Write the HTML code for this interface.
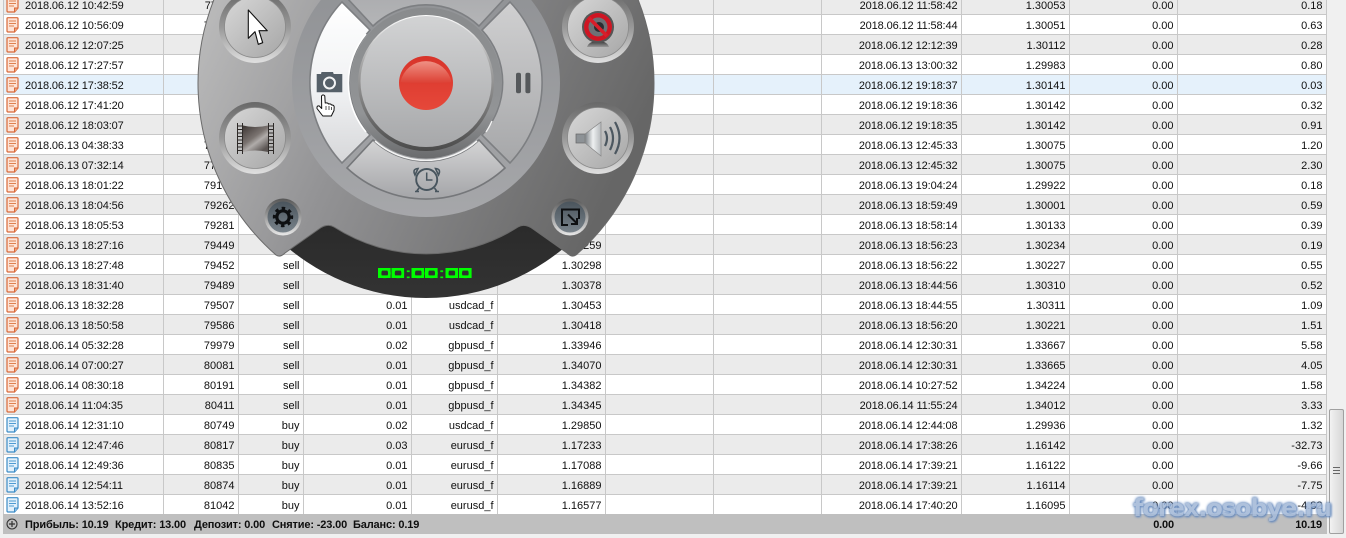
<!DOCTYPE html>
<html><head><meta charset="utf-8"><style>
html,body{margin:0;padding:0;width:1346px;height:538px;overflow:hidden;background:#f0f0f0}
body{position:relative;font:11px "Liberation Sans","DejaVu Sans",sans-serif;color:#0f0f0f}
table{position:absolute;left:3px;top:-5px;width:1324px;table-layout:fixed;border-collapse:separate;border-spacing:0;background:#fff;border-left:1px solid #c4c8cc}
td{height:16px;padding:3px 3.5px 0 0;border-right:1px solid #c8c8c8;border-bottom:1px solid #c8c8c8;text-align:right;white-space:nowrap;overflow:hidden;line-height:16px}
td:first-child{text-align:left;padding-left:21px;position:relative;letter-spacing:-.12px}
td:nth-child(9){letter-spacing:-.12px}
tr:nth-child(odd) td{background:#ebebeb}
tr.h td{background:#e5f1fb!important}
.i{position:absolute;left:2px;top:2px}
#foot{position:absolute;left:3px;top:514px;width:1324px;height:20px;background:#bfbfbf;font-weight:bold;line-height:22px;letter-spacing:-.15px}
#foot span{position:absolute;top:0}
#sb{position:absolute;left:1329px;top:409px;width:13px;height:123px;border:1px solid #a0a0a0;border-radius:2px;background:linear-gradient(90deg,#f2f2f2,#d6d6d6)}
#sb i{position:absolute;left:3px;top:57px;width:7px;height:5px;border-top:1px solid #666;border-bottom:1px solid #666}
#sb i:after{content:"";position:absolute;left:0;top:2px;width:7px;height:1px;background:#666}
#wm{position:absolute;left:1133px;top:494px;width:205px;font:bold 24px "DejaVu Sans",sans-serif;letter-spacing:-1.05px;color:#a6bbd9;white-space:nowrap;text-shadow:0 0 2px #5a7fb5,0 0 3px #6489bd,1px 1px 2px #6489bd;opacity:.9}
svg#d{position:absolute;left:0;top:0}
</style></head><body>
<svg width="0" height="0" style="position:absolute"><defs>
<symbol id="o" viewBox="0 0 13 16"><path d="M1 1.500Q1 .7 2 .7H11Q12 .7 12 1.500V11L8.500 15H2Q1 15 1 14Z" fill="#fde3d6" stroke="#d8693a" stroke-width="1.2"/><path d="M3 4H10M3 6.500H10M3 9H8" stroke="#e0814f" stroke-width="1.1"/><path d="M8.500 15V11H12" fill="#f0a27c" stroke="#d8693a"/></symbol>
<symbol id="b" viewBox="0 0 13 16"><path d="M1 1.500Q1 .7 2 .7H11Q12 .7 12 1.500V11L8.500 15H2Q1 15 1 14Z" fill="#e2f0fb" stroke="#3d8cc6" stroke-width="1.2"/><path d="M3 4H10M3 6.500H10M3 9H8" stroke="#4f9bd2" stroke-width="1.1"/><path d="M8.500 15V11H12" fill="#8fc1e6" stroke="#3d8cc6"/></symbol>
</defs></svg>
<table>
<colgroup><col style="width:160px"><col style="width:75px"><col style="width:65px"><col style="width:108px"><col style="width:86px"><col style="width:108px"><col style="width:108px"><col style="width:108px"><col style="width:140px"><col style="width:108px"><col style="width:108px"><col></colgroup>
<tr><td><svg class="i" width="13" height="16"><use href="#o"/></svg>2018.06.12 10:42:59</td><td>77011</td><td>sell</td><td>0.01</td><td>usdcad_f</td><td>1.30120</td><td></td><td></td><td>2018.06.12 11:58:42</td><td>1.30053</td><td>0.00</td><td>0.18</td></tr>
<tr><td><svg class="i" width="13" height="16"><use href="#o"/></svg>2018.06.12 10:56:09</td><td>77025</td><td></td><td></td><td></td><td></td><td></td><td></td><td>2018.06.12 11:58:44</td><td>1.30051</td><td>0.00</td><td>0.63</td></tr>
<tr><td><svg class="i" width="13" height="16"><use href="#o"/></svg>2018.06.12 12:07:25</td><td></td><td></td><td></td><td></td><td></td><td></td><td></td><td>2018.06.12 12:12:39</td><td>1.30112</td><td>0.00</td><td>0.28</td></tr>
<tr><td><svg class="i" width="13" height="16"><use href="#o"/></svg>2018.06.12 17:27:57</td><td></td><td></td><td></td><td></td><td></td><td></td><td></td><td>2018.06.13 13:00:32</td><td>1.29983</td><td>0.00</td><td>0.80</td></tr>
<tr class="h"><td><svg class="i" width="13" height="16"><use href="#o"/></svg>2018.06.12 17:38:52</td><td></td><td></td><td></td><td></td><td></td><td></td><td></td><td>2018.06.12 19:18:37</td><td>1.30141</td><td>0.00</td><td>0.03</td></tr>
<tr><td><svg class="i" width="13" height="16"><use href="#o"/></svg>2018.06.12 17:41:20</td><td></td><td></td><td></td><td></td><td></td><td></td><td></td><td>2018.06.12 19:18:36</td><td>1.30142</td><td>0.00</td><td>0.32</td></tr>
<tr><td><svg class="i" width="13" height="16"><use href="#o"/></svg>2018.06.12 18:03:07</td><td></td><td></td><td></td><td></td><td></td><td></td><td></td><td>2018.06.12 19:18:35</td><td>1.30142</td><td>0.00</td><td>0.91</td></tr>
<tr><td><svg class="i" width="13" height="16"><use href="#o"/></svg>2018.06.13 04:38:33</td><td>77801</td><td></td><td></td><td></td><td></td><td></td><td></td><td>2018.06.13 12:45:33</td><td>1.30075</td><td>0.00</td><td>1.20</td></tr>
<tr><td><svg class="i" width="13" height="16"><use href="#o"/></svg>2018.06.13 07:32:14</td><td>77944</td><td></td><td></td><td></td><td></td><td></td><td></td><td>2018.06.13 12:45:32</td><td>1.30075</td><td>0.00</td><td>2.30</td></tr>
<tr><td><svg class="i" width="13" height="16"><use href="#o"/></svg>2018.06.13 18:01:22</td><td>79187</td><td></td><td></td><td></td><td></td><td></td><td></td><td>2018.06.13 19:04:24</td><td>1.29922</td><td>0.00</td><td>0.18</td></tr>
<tr><td><svg class="i" width="13" height="16"><use href="#o"/></svg>2018.06.13 18:04:56</td><td>79262</td><td></td><td></td><td></td><td></td><td></td><td></td><td>2018.06.13 18:59:49</td><td>1.30001</td><td>0.00</td><td>0.59</td></tr>
<tr><td><svg class="i" width="13" height="16"><use href="#o"/></svg>2018.06.13 18:05:53</td><td>79281</td><td></td><td></td><td></td><td></td><td></td><td></td><td>2018.06.13 18:58:14</td><td>1.30133</td><td>0.00</td><td>0.39</td></tr>
<tr><td><svg class="i" width="13" height="16"><use href="#o"/></svg>2018.06.13 18:27:16</td><td>79449</td><td>sell</td><td></td><td></td><td>1.30259</td><td></td><td></td><td>2018.06.13 18:56:23</td><td>1.30234</td><td>0.00</td><td>0.19</td></tr>
<tr><td><svg class="i" width="13" height="16"><use href="#o"/></svg>2018.06.13 18:27:48</td><td>79452</td><td>sell</td><td></td><td></td><td>1.30298</td><td></td><td></td><td>2018.06.13 18:56:22</td><td>1.30227</td><td>0.00</td><td>0.55</td></tr>
<tr><td><svg class="i" width="13" height="16"><use href="#o"/></svg>2018.06.13 18:31:40</td><td>79489</td><td>sell</td><td></td><td></td><td>1.30378</td><td></td><td></td><td>2018.06.13 18:44:56</td><td>1.30310</td><td>0.00</td><td>0.52</td></tr>
<tr><td><svg class="i" width="13" height="16"><use href="#o"/></svg>2018.06.13 18:32:28</td><td>79507</td><td>sell</td><td>0.01</td><td>usdcad_f</td><td>1.30453</td><td></td><td></td><td>2018.06.13 18:44:55</td><td>1.30311</td><td>0.00</td><td>1.09</td></tr>
<tr><td><svg class="i" width="13" height="16"><use href="#o"/></svg>2018.06.13 18:50:58</td><td>79586</td><td>sell</td><td>0.01</td><td>usdcad_f</td><td>1.30418</td><td></td><td></td><td>2018.06.13 18:56:20</td><td>1.30221</td><td>0.00</td><td>1.51</td></tr>
<tr><td><svg class="i" width="13" height="16"><use href="#o"/></svg>2018.06.14 05:32:28</td><td>79979</td><td>sell</td><td>0.02</td><td>gbpusd_f</td><td>1.33946</td><td></td><td></td><td>2018.06.14 12:30:31</td><td>1.33667</td><td>0.00</td><td>5.58</td></tr>
<tr><td><svg class="i" width="13" height="16"><use href="#o"/></svg>2018.06.14 07:00:27</td><td>80081</td><td>sell</td><td>0.01</td><td>gbpusd_f</td><td>1.34070</td><td></td><td></td><td>2018.06.14 12:30:31</td><td>1.33665</td><td>0.00</td><td>4.05</td></tr>
<tr><td><svg class="i" width="13" height="16"><use href="#o"/></svg>2018.06.14 08:30:18</td><td>80191</td><td>sell</td><td>0.01</td><td>gbpusd_f</td><td>1.34382</td><td></td><td></td><td>2018.06.14 10:27:52</td><td>1.34224</td><td>0.00</td><td>1.58</td></tr>
<tr><td><svg class="i" width="13" height="16"><use href="#o"/></svg>2018.06.14 11:04:35</td><td>80411</td><td>sell</td><td>0.01</td><td>gbpusd_f</td><td>1.34345</td><td></td><td></td><td>2018.06.14 11:55:24</td><td>1.34012</td><td>0.00</td><td>3.33</td></tr>
<tr><td><svg class="i" width="13" height="16"><use href="#b"/></svg>2018.06.14 12:31:10</td><td>80749</td><td>buy</td><td>0.02</td><td>usdcad_f</td><td>1.29850</td><td></td><td></td><td>2018.06.14 12:44:08</td><td>1.29936</td><td>0.00</td><td>1.32</td></tr>
<tr><td><svg class="i" width="13" height="16"><use href="#b"/></svg>2018.06.14 12:47:46</td><td>80817</td><td>buy</td><td>0.03</td><td>eurusd_f</td><td>1.17233</td><td></td><td></td><td>2018.06.14 17:38:26</td><td>1.16142</td><td>0.00</td><td>-32.73</td></tr>
<tr><td><svg class="i" width="13" height="16"><use href="#b"/></svg>2018.06.14 12:49:36</td><td>80835</td><td>buy</td><td>0.01</td><td>eurusd_f</td><td>1.17088</td><td></td><td></td><td>2018.06.14 17:39:21</td><td>1.16122</td><td>0.00</td><td>-9.66</td></tr>
<tr><td><svg class="i" width="13" height="16"><use href="#b"/></svg>2018.06.14 12:54:11</td><td>80874</td><td>buy</td><td>0.01</td><td>eurusd_f</td><td>1.16889</td><td></td><td></td><td>2018.06.14 17:39:21</td><td>1.16114</td><td>0.00</td><td>-7.75</td></tr>
<tr><td><svg class="i" width="13" height="16"><use href="#b"/></svg>2018.06.14 13:52:16</td><td>81042</td><td>buy</td><td>0.01</td><td>eurusd_f</td><td>1.16577</td><td></td><td></td><td>2018.06.14 17:40:20</td><td>1.16095</td><td>0.00</td><td>-4.82</td></tr>
</table>
<div id="foot">
<svg style="position:absolute;left:3px;top:4px" width="12" height="12"><circle cx="6" cy="6" r="5" fill="none" stroke="#333" stroke-width="1.1"/><path d="M3 6H9M6 3V9" stroke="#333" stroke-width="1.2"/></svg>
<span style="left:22px">Прибыль: 10.19</span><span style="left:112px">Кредит: 13.00</span><span style="left:191px">Депозит: 0.00</span><span style="left:269px">Снятие: -23.00</span><span style="left:350px">Баланс: 0.19</span>
<span style="right:153px">0.00</span><span style="right:5px">10.19</span>
</div>
<div id="sb"><i></i></div>
<div id="wm">forex.osobye.ru</div>
<svg id="d" width="1346" height="538" viewBox="0 0 1346 538">
<defs>
<linearGradient id="g1" x1="0" y1="0.2" x2="1" y2="0.6"><stop offset="0" stop-color="#c2c2c2"/><stop offset=".45" stop-color="#939395"/><stop offset="1" stop-color="#666"/></linearGradient>
<linearGradient id="g2" x1="0" y1="0" x2="0" y2="1"><stop offset="0" stop-color="#8d8f92"/><stop offset="1" stop-color="#a6a7aa"/></linearGradient>
<linearGradient id="blk" x1="0" y1="0" x2="0" y2="1"><stop offset=".6" stop-color="#1f1f1f"/><stop offset="1" stop-color="#333"/></linearGradient>
<linearGradient id="sL" x1="0" y1="0" x2="0" y2="1"><stop offset="0" stop-color="#fff"/><stop offset=".55" stop-color="#f0f1f3"/><stop offset="1" stop-color="#d6d7d9"/></linearGradient>
<linearGradient id="sR" x1="0" y1="0" x2="0" y2="1"><stop offset="0" stop-color="#d0d0d1"/><stop offset="1" stop-color="#a6a7a9"/></linearGradient>
<linearGradient id="sB" x1="0" y1="0" x2="0" y2="1"><stop offset="0" stop-color="#d4d4d5"/><stop offset="1" stop-color="#a4a5a8"/></linearGradient>
<linearGradient id="sT" x1="0" y1="0" x2="0" y2="1"><stop offset="0" stop-color="#a4a5a8"/><stop offset="1" stop-color="#b4b5b7"/></linearGradient>
<linearGradient id="ring" x1="0" y1="0" x2="0" y2="1"><stop offset="0" stop-color="#898b8d"/><stop offset=".7" stop-color="#929496"/><stop offset="1" stop-color="#6a6b6d"/></linearGradient>
<linearGradient id="rim" x1="0" y1="0" x2="0" y2="1"><stop offset="0" stop-color="#fff"/><stop offset=".35" stop-color="#a8a8a8"/><stop offset="1" stop-color="#4a4a4a"/></linearGradient>
<linearGradient id="disc" x1="0" y1="0" x2="0" y2="1"><stop offset="0" stop-color="#d2d3d4"/><stop offset="1" stop-color="#a7a8aa"/></linearGradient>
<linearGradient id="red" x1="0" y1="0" x2="0" y2="1"><stop offset="0" stop-color="#d8342a"/><stop offset="1" stop-color="#e6483a"/></linearGradient>
<linearGradient id="gl" x1="0" y1="0" x2="0" y2="1"><stop offset="0" stop-color="#ef9184"/><stop offset="1" stop-color="#dc3e32"/></linearGradient>
<linearGradient id="bo" x1="0" y1="0" x2="0" y2="1"><stop offset="0" stop-color="#686868"/><stop offset=".5" stop-color="#989898"/><stop offset="1" stop-color="#e0e0e0"/></linearGradient>
<linearGradient id="bd" x1="0" y1="0" x2="1" y2="1"><stop offset="0" stop-color="#d8d8d8"/><stop offset="1" stop-color="#a6a6a6"/></linearGradient>
<linearGradient id="sm" x1="0" y1="0" x2="0" y2="1"><stop offset="0" stop-color="#4a545c"/><stop offset="1" stop-color="#79838b"/></linearGradient>
<linearGradient id="smo" x1="0" y1="0" x2="0" y2="1"><stop offset="0" stop-color="#555"/><stop offset="1" stop-color="#e8e8e8"/></linearGradient>
<linearGradient id="film" x1="0" y1="0" x2=".7" y2="1"><stop offset="0" stop-color="#3c3533"/><stop offset=".5" stop-color="#7a7370"/><stop offset=".68" stop-color="#b0acaa"/><stop offset="1" stop-color="#5c5654"/></linearGradient>
<linearGradient id="cone" x1="0" y1="0" x2="1" y2="0"><stop offset="0" stop-color="#7d8286"/><stop offset=".5" stop-color="#eef0f1"/><stop offset="1" stop-color="#b5b9bc"/></linearGradient>
<linearGradient id="st" x1="0" y1="0" x2="0" y2="1"><stop offset="0" stop-color="#333"/><stop offset="1" stop-color="#999"/></linearGradient>
</defs>
<g transform="translate(426 83)">
<circle r="215" fill="url(#blk)"/>
<path d="M-150 172A228 228 0 1 1 150 172Q146 175 141 170L107 146Q99 140 92 144A171 171 0 0 1-92 144Q-99 140-107 146L-141 170Q-146 175-150 172Z" fill="url(#g1)" stroke="#6a6a6a" stroke-width="1"/>
<circle r="134" fill="url(#g2)"/>
<path d="M-84-81A117 117 0 0 0-84 80L-56 52A77 77 0 0 1-56-53Z" fill="url(#sL)" stroke="#7d7f82" stroke-width="1.6"/>
<path d="M84-81A117 117 0 0 1 84 80L56 52A77 77 0 0 0 56-53Z" fill="url(#sR)" stroke="#7d7f82" stroke-width="1.6"/>
<path d="M-79 85A116 116 0 0 0 79 85L53 57A77 77 0 0 1-53 57Z" fill="url(#sB)" stroke="#75777a" stroke-width="1.6"/>
<path d="M-79-85A116 116 0 0 1 79-85L53-57A77 77 0 0 0-53-57Z" fill="url(#sT)" stroke="#7d7f82" stroke-width="1.6"/>
<path d="M-51 58A77 77 0 0 0 51 58" fill="none" stroke="#f4f4f4" stroke-width="1.6"/>
<path d="M-60-49A77 77 0 0 0-60 49" fill="none" stroke="#fff" stroke-width="1.6"/>
<path d="M60 49A77 77 0 0 0 66 38" fill="none" stroke="#f4f4f4" stroke-width="1.4"/>
<circle r="75.5" fill="url(#ring)"/>
<circle r="68" fill="url(#rim)"/>
<circle cy="-1.5" r="65.5" fill="url(#disc)"/>
<circle r="27" fill="url(#red)"/>
<path d="M-25.500-1A26 26 0 0 1 25.500-1C14 1-14 1-25.500-1Z" fill="url(#gl)"/>
</g>
<!-- small buttons -->
<circle cx="255" cy="27" r="36" fill="url(#bo)"/><circle cx="255" cy="27" r="30.5" fill="url(#bd)" stroke="#8a8a8a" stroke-width=".8"/>
<circle cx="255" cy="138" r="36" fill="url(#bo)"/><circle cx="255" cy="138" r="30.5" fill="url(#bd)" stroke="#8a8a8a" stroke-width=".8"/>
<circle cx="598" cy="27" r="36" fill="url(#bo)"/><circle cx="598" cy="27" r="30.5" fill="url(#bd)" stroke="#8a8a8a" stroke-width=".8"/>
<circle cx="598" cy="138" r="36" fill="url(#bo)"/><circle cx="598" cy="138" r="30.5" fill="url(#bd)" stroke="#8a8a8a" stroke-width=".8"/>
<circle cx="283" cy="217" r="18.5" fill="url(#smo)"/><circle cx="283" cy="217" r="15.5" fill="url(#sm)"/>
<circle cx="570" cy="217" r="18.5" fill="url(#smo)"/><circle cx="570" cy="217" r="15.5" fill="url(#sm)"/>
<!-- arrow -->
<path d="M248.300 10V38.300L255 31.700 258.300 44.300 262.700 42.700 259 30.700H267.300Z" fill="#fff" stroke="#111" stroke-width="1.1" stroke-linejoin="round"/>
<!-- film -->
<path d="M237.500 123V154M242.500 123V154M268.500 123V154M273.500 123V154" stroke="#2e2a28" stroke-width="1"/>
<path d="M237.500 126H242.500M237.500 129.500H242.500M237.500 133H242.500M237.500 136.500H242.500M237.500 140H242.500M237.500 143.500H242.500M237.500 147H242.500M237.500 150.500H242.500M268.500 126H273.500M268.500 129.500H273.500M268.500 133H273.500M268.500 136.500H273.500M268.500 140H273.500M268.500 143.500H273.500M268.500 147H273.500M268.500 150.500H273.500" stroke="#2e2a28" stroke-width="1.1"/>
<path d="M243 125.500Q255 128.500 268 125.500V152Q255 149 243 152Z" fill="url(#film)"/>
<!-- webcam -->
<path d="M587 47Q589 41 598 41T609 47Z" fill="url(#st)"/>
<circle cx="598" cy="27" r="16" fill="#555"/>
<circle cx="598" cy="27" r="14" fill="#d01a26"/>
<circle cx="598" cy="27" r="9.500" fill="#6d7175"/><circle cx="599" cy="27" r="5" fill="#2a2d31"/>
<circle cx="598" cy="27" r="11.500" fill="none" stroke="#cf1523" stroke-width="3.5"/>
<path d="M589 18L607 36" stroke="#d81e2a" stroke-width="3.500"/>
<!-- speaker -->
<rect x="576" y="134" width="9" height="9" fill="#8d9296" stroke="#666" stroke-width=".7"/>
<path d="M585 134L601 122V156L585 143Z" fill="url(#cone)" stroke="#888" stroke-width=".7"/>
<path d="M605 131Q609 138 605 146M610 127Q616 138 610 150M615 122Q624 138 615 154" fill="none" stroke="#4c5760" stroke-width="2.2"/>
<!-- camera -->
<path d="M316.700 74H321L321.500 72H333L333.700 74H342.300V92.300H316.700Z" fill="#566069"/>
<circle cx="329.500" cy="83" r="5.500" fill="none" stroke="#f3f4f5" stroke-width="2"/>
<!-- pause -->
<rect x="516" y="72.700" width="5" height="20.600" rx="2" fill="#55585b"/><rect x="525.400" y="72.700" width="5" height="20.600" rx="2" fill="#55585b"/>
<!-- alarm -->
<g fill="none" stroke="#48555e" stroke-width="1.900">
<circle cx="426.700" cy="179.500" r="10.500"/>
<path d="M426.700 172.500V180H432.500" stroke-width="1.500"/>
<path d="M415 175Q412 169 418 168.500ZM438.500 175Q441.500 169 435.500 168.500Z" stroke-width="1.600"/>
<path d="M419 188L416.500 191.500M434.500 188L437 191.500M415 191.500H419M435 191.500H439" stroke-width="1.600"/>
</g>
<!-- hand -->
<path d="M321.500 96Q323 93.800 324.800 96L325.200 103Q328 102.500 328.500 104Q331 103.500 331.500 105Q334 104.800 334.200 107L334 110.500 331.300 116H322.800L317 108.500Q316.500 105.500 319.300 106L321.700 108.500Z" fill="#fff" stroke="#111" stroke-width="1" stroke-linejoin="round"/>
<path d="M326 106V110M329 106V110M331.500 107V110" stroke="#111" stroke-width=".7"/>
<!-- gear -->
<g fill="none" stroke="#0e1012"><circle cx="283" cy="217" r="6.200" stroke-width="3.200"/><circle cx="283" cy="217" r="8.800" stroke-width="2.800" stroke-dasharray="3.400 3.510" transform="rotate(-10 283 217)"/></g>
<!-- resize -->
<path d="M568 225H562V209.500H579V219M568 214.500L577 223.500M577 218V224H571" fill="none" stroke="#0e1012" stroke-width="2"/>
<!-- timer: square frames behind the real digits give the blocky LCD look -->
<g fill="none" stroke="#0f0" stroke-width="2.600">
<rect x="379.300" y="269.300" width="10" height="7.400"/><rect x="392.800" y="269.300" width="10" height="7.400"/><rect x="412.800" y="269.300" width="10" height="7.400"/><rect x="426.300" y="269.300" width="10" height="7.400"/><rect x="446.800" y="269.300" width="10" height="7.400"/><rect x="460.300" y="269.300" width="10" height="7.400"/>
</g>
<text x="378" y="278" textLength="94" lengthAdjust="spacingAndGlyphs" font-family="Liberation Sans,sans-serif" font-size="14" fill="#0f0" stroke="#0f0" stroke-width=".3">00:00:00</text>
</svg>
</body></html>
